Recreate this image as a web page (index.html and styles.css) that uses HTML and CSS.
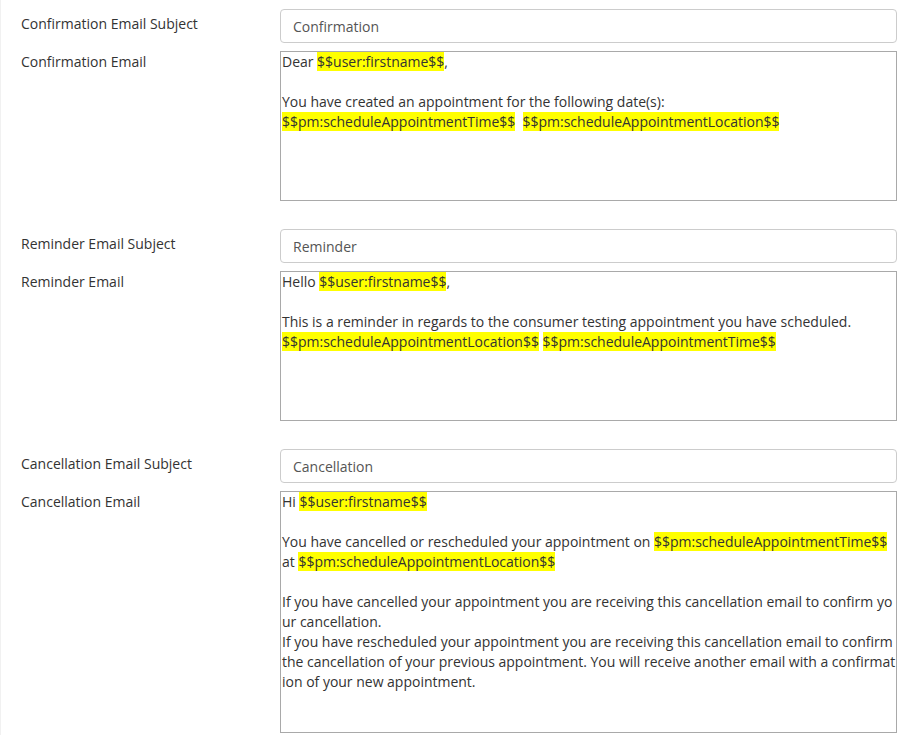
FILE: index.html
```html
<!DOCTYPE html>
<html lang="en">
<head>
<meta charset="utf-8">
<title>Email templates</title>
<link rel="stylesheet" href="styles.css">
</head>
<body>
<div class="page">
  <section class="group">
    <div class="row">
      <label class="lbl">Confirmation Email Subject</label>
      <div class="field">Confirmation</div>
    </div>
    <div class="row">
      <label class="lbl lbl-editor">Confirmation Email</label>
      <div class="editor h150">Dear <span class="hl">$$user:firstname$$</span>,<br><br>You have created an appointment for the following date(s):<br><span class="hl">$$pm:scheduleAppointmentTime$$</span>&nbsp; <span class="hl">$$pm:scheduleAppointmentLocation$$</span></div>
    </div>
  </section>
  <section class="group">
    <div class="row">
      <label class="lbl">Reminder Email Subject</label>
      <div class="field">Reminder</div>
    </div>
    <div class="row">
      <label class="lbl lbl-editor">Reminder Email</label>
      <div class="editor h150">Hello <span class="hl">$$user:firstname$$</span>,<br><br>This is a reminder in regards to the consumer testing appointment you have scheduled.<br><span class="hl">$$pm:scheduleAppointmentLocation$$</span> <span class="hl">$$pm:scheduleAppointmentTime$$</span></div>
    </div>
  </section>
  <section class="group">
    <div class="row">
      <label class="lbl">Cancellation Email Subject</label>
      <div class="field">Cancellation</div>
    </div>
    <div class="row">
      <label class="lbl lbl-editor">Cancellation Email</label>
      <div class="editor h242">Hi <span class="hl">$$user:firstname$$</span><br><br>You have cancelled or rescheduled your appointment on <span class="hl nobreak">$$pm:scheduleAppointmentTime$$</span> at <span class="hl nobreak">$$pm:scheduleAppointmentLocation$$</span><br><br>If you have cancelled your appointment you are receiving this cancellation email to confirm your cancellation.<br>If you have rescheduled your appointment you are receiving this cancellation email to confirm the cancellation of your previous appointment. You will receive another email with a confirmation of your new appointment.</div>
    </div>
  </section>
</div>
</body>
</html>
```
FILE: styles.css
```css
html, body {
  margin: 0;
  padding: 0;
  background: #fff;
}
body {
  font-family: "Open Sans", "Liberation Sans", sans-serif;
  font-size: 14px;
  line-height: 20px;
  color: #333;
}
.page {
  border-left: 1px solid #f1f1f1;
  min-height: 735px;
  box-sizing: border-box;
  padding: 9px 27px 0 20px;
}
.group {
  display: flex;
  flex-direction: column;
  gap: 8px;
  margin-bottom: 28px;
}
.row {
  display: grid;
  grid-template-columns: 259px 1fr;
  align-items: start;
}
.lbl {
  display: block;
  padding-top: 5px;
  color: #333;
}
.lbl-editor {
  padding-top: 1px;
}
.field {
  box-sizing: border-box;
  height: 34px;
  border: 1px solid #ccc;
  border-radius: 4px;
  padding: 7px 12px 0;
  color: #555;
}
.editor {
  box-sizing: border-box;
  border: 1px solid #a9a9a9;
  padding: 0 0 0 1px;
  color: #333;
  word-break: break-all;
  letter-spacing: -0.01px;
  line-height: 20px;
  overflow: hidden;
}
.h150 { height: 150px; }
.h242 { height: 242px; }
.hl {
  background: #ffff00;
}
.nobreak {
  word-break: keep-all;
  white-space: nowrap;
}
```
